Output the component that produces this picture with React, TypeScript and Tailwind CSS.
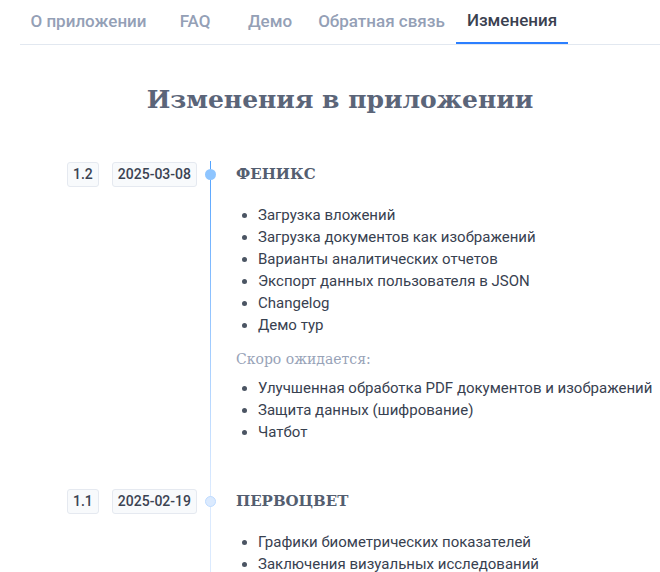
import React from "react";

type Release = {
  version: string;
  date: string;
  name: string;
  items: string[];
  upcoming?: string[];
  current?: boolean;
};

const tabs = [
  { label: "О приложении", width: "w-[137px]" },
  { label: "FAQ", width: "w-[76px]" },
  { label: "Демо", width: "w-[74px]" },
  { label: "Обратная связь", width: "w-[149px]" },
  { label: "Изменения", width: "w-[112px]", active: true },
];

const releases: Release[] = [
  {
    version: "1.2",
    date: "2025-03-08",
    name: "ФЕНИКС",
    current: true,
    items: [
      "Загрузка вложений",
      "Загрузка документов как изображений",
      "Варианты аналитических отчетов",
      "Экспорт данных пользователя в JSON",
      "Changelog",
      "Демо тур",
    ],
    upcoming: [
      "Улучшенная обработка PDF документов и изображений",
      "Защита данных (шифрование)",
      "Чатбот",
    ],
  },
  {
    version: "1.1",
    date: "2025-02-19",
    name: "ПЕРВОЦВЕТ",
    items: ["Графики биометрических показателей", "Заключения визуальных исследований"],
  },
];

const slab = "font-['DejaVu_Serif',serif]";

function Badge({ children }: { children: React.ReactNode }) {
  return (
    <span className="h-[25px] px-[5px] flex items-center rounded-[3px] border border-[#e5e9f0] bg-[#f8fafc] text-[14px] font-medium text-[#3b4352]">
      {children}
    </span>
  );
}

function Entry({ release, last }: { release: Release; last?: boolean }) {
  return (
    <div className="flex">
      <div className="w-[177px] shrink-0 flex justify-end gap-[13px] pt-px">
        <Badge>{release.version}</Badge>
        <Badge>{release.date}</Badge>
      </div>
      <div className="w-[28px] shrink-0 relative">
        <div
          className={
            "absolute left-[13px] top-0 bottom-0 w-px " +
            (release.current ? "bg-gradient-to-b from-blue-400 to-blue-100" : "bg-blue-100")
          }
        />
        <div
          className={
            "absolute left-[8px] top-[8px] w-[11px] h-[11px] rounded-full " +
            (release.current ? "bg-blue-300" : "bg-blue-100 border border-blue-200")
          }
        />
      </div>
      <div className={"pl-[11px] " + (last ? "pb-2" : "pb-[45px]")}>
        <h2 className={slab + " text-[15px] leading-[26px] font-bold text-[#545e70]"}>{release.name}</h2>
        <ul className="mt-[17px] list-disc pl-[22px] text-[15px] leading-[22px] text-[#384150] marker:text-[#4b5563]">
          {release.items.map((item) => (
            <li key={item}>{item}</li>
          ))}
        </ul>
        {release.upcoming && (
          <>
            <p className={slab + " mt-[12px] text-[14px] leading-[22px] text-[#98a3b8]"}>Скоро ожидается:</p>
            <ul className="mt-[7px] list-disc pl-[22px] text-[15px] leading-[22px] text-[#384150] marker:text-[#4b5563]">
              {release.upcoming.map((item) => (
                <li key={item}>{item}</li>
              ))}
            </ul>
          </>
        )}
      </div>
    </div>
  );
}

export default function App() {
  return (
    <div className="min-h-screen bg-white font-['Roboto',sans-serif] pl-5 overflow-hidden">
      {/* Навигация */}
      <nav className="flex border-b border-[#e2e8f0]">
        {tabs.map((tab) => (
          <div
            key={tab.label}
            className={
              tab.width +
              " h-[44px] flex items-center justify-center text-[17px] font-medium whitespace-nowrap " +
              (tab.active
                ? "text-[#3a4150] border-b-2 border-blue-500 -mb-px"
                : "text-[#94a0b6]")
            }
          >
            {tab.label}
          </div>
        ))}
      </nav>

      <h1 className={slab + " mt-[39px] text-center text-[25px] leading-[32px] font-bold text-[#5b6579]"}>
        Изменения в приложении
      </h1>

      <div className="mt-[45px]">
        {releases.map((r, i) => (
          <Entry key={r.version} release={r} last={i === releases.length - 1} />
        ))}
      </div>
    </div>
  );
}
